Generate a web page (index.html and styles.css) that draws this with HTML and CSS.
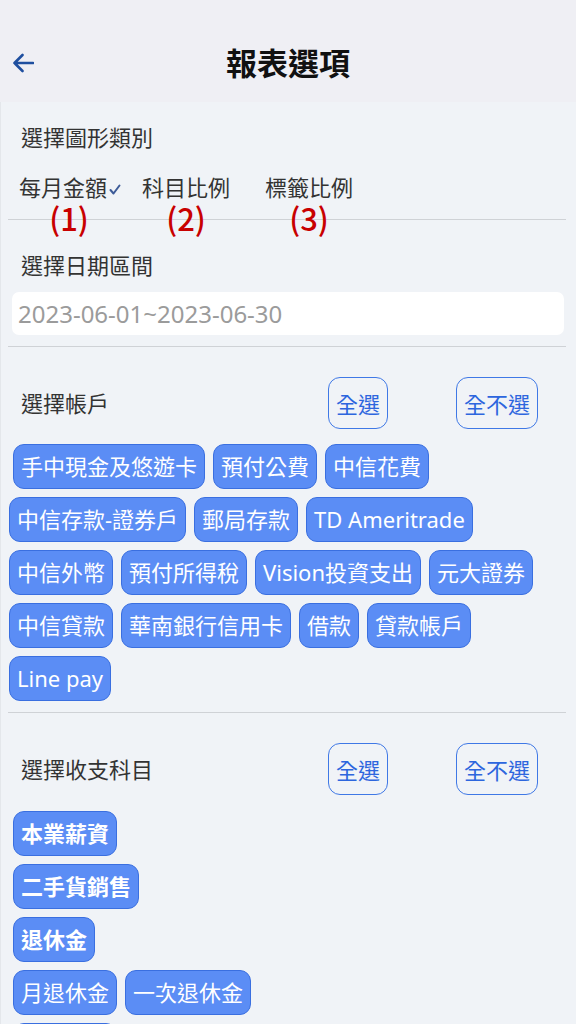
FILE: index.html
```html
<!DOCTYPE html>
<html lang="zh-Hant">
<head>
  <meta charset="UTF-8">
  <title>報表選項</title>
  <link rel="stylesheet" href="styles.css">
</head>
<body>

  <header class="topbar">
    <button class="back" aria-label="返回">
      <svg width="22" height="20" viewBox="0 0 22 20">
        <path d="M21 10H2.5M10.5 2L2.5 10L10.5 18" fill="none" stroke="#1f4f9f" stroke-width="2.6" stroke-linecap="round" stroke-linejoin="round"/>
      </svg>
    </button>
    <h1>報表選項</h1>
    <span></span>
  </header>

  <main class="content">

    <section class="block first">
      <div class="block-title">選擇圖形類別</div>
      <div class="chart-types">
        <div class="type">
          <span class="type-text">每月金額<svg class="tick" width="12" height="11" viewBox="0 0 12 11"><path d="M1.5 6L4.5 9.5L10.5 1.5" fill="none" stroke="#3d5b98" stroke-width="2" stroke-linecap="round" stroke-linejoin="round"/></svg></span>
          <span class="mark">(1)</span>
        </div>
        <div class="type">
          <span class="type-text">科目比例</span>
          <span class="mark">(2)</span>
        </div>
        <div class="type">
          <span class="type-text">標籤比例</span>
          <span class="mark">(3)</span>
        </div>
      </div>
    </section>

    <hr class="line">

    <section class="block">
      <div class="block-title">選擇日期區間</div>
      <input class="date-range" type="text" placeholder="2023-06-01~2023-06-30">
    </section>

    <hr class="line">

    <section class="block">
      <div class="block-head">
        <div class="block-title">選擇帳戶</div>
        <button class="pick">全選</button>
        <button class="pick">全不選</button>
      </div>
      <div class="chips accounts">
        <span class="chip">手中現金及悠遊卡</span>
        <span class="chip">預付公費</span>
        <span class="chip">中信花費</span>
        <span class="chip">中信存款-證券戶</span>
        <span class="chip">郵局存款</span>
        <span class="chip">TD Ameritrade</span>
        <span class="chip">中信外幣</span>
        <span class="chip">預付所得稅</span>
        <span class="chip">Vision投資支出</span>
        <span class="chip">元大證券</span>
        <span class="chip">中信貸款</span>
        <span class="chip">華南銀行信用卡</span>
        <span class="chip">借款</span>
        <span class="chip">貸款帳戶</span>
        <span class="chip">Line pay</span>
      </div>
    </section>

    <hr class="line">

    <section class="block">
      <div class="block-head">
        <div class="block-title">選擇收支科目</div>
        <button class="pick">全選</button>
        <button class="pick">全不選</button>
      </div>
      <div class="items">
        <div class="chip-row"><span class="chip main">本業薪資</span></div>
        <div class="chip-row"><span class="chip main">二手貨銷售</span></div>
        <div class="chip-row"><span class="chip main">退休金</span></div>
        <div class="chip-row"><span class="chip">月退休金</span><span class="chip">一次退休金</span></div>
        <div class="chip-row"><span class="chip main">其他收入</span></div>
      </div>
    </section>

  </main>

</body>
</html>
```

FILE: styles.css
```css
html, body {
  margin: 0;
  height: 1024px;
  overflow: hidden;
}

body {
  font-family: "Noto Sans", "Noto Sans CJK TC", sans-serif;
  background-color: #f0f3f7;
  color: #333;
}

.topbar {
  height: 102px;
  box-sizing: border-box;
  padding-top: 24px;
  display: grid;
  grid-template-columns: 1fr auto 1fr;
  align-items: center;
  background-color: #efeff4;
}

.back {
  justify-self: start;
  margin-left: 12px;
  padding: 0;
  border: none;
  background: none;
  display: flex;
}

.topbar h1 {
  margin: 0;
  font-size: 31px;
  line-height: 1;
  font-weight: 700;
  color: #111;
}

.content {
  padding: 0 10px 0 7px;
  border-left: 1px solid #e4e7eb;
}

.block {
  padding-top: 30px;
}

.block.first {
  padding-top: 20px;
}

.block-title {
  font-size: 22px;
  line-height: 30px;
  padding-left: 13px;
  color: #333;
}

/* 圖形類別 */
.chart-types {
  display: grid;
  grid-template-columns: 123px 123px 123px;
  margin-top: 20px;
  padding-left: 11px;
  font-size: 22px;
  line-height: 30px;
  color: #333;
}

.type {
  position: relative;
}

.tick {
  margin-left: 2px;
  vertical-align: 1px;
}

.mark {
  position: absolute;
  top: 30px;
  left: 0;
  width: 100px;
  text-align: center;
  font-family: "Noto Sans CJK TC", sans-serif;
  font-size: 31px;
  font-weight: 500;
  line-height: 31px;
  color: #c80000;
}

.type:nth-child(2) .mark,
.type:nth-child(3) .mark {
  left: -6px;
}

.line {
  margin: 17px 0 0;
  border: none;
  border-top: 1px solid #cfd2d6;
}

.block:nth-of-type(2) + .line,
.block:nth-of-type(3) + .line {
  margin-top: 11px;
}

/* 日期 */
.date-range {
  display: block;
  box-sizing: border-box;
  width: 552px;
  height: 43px;
  margin: 12px 0 0 4px;
  padding: 0 6px;
  border: none;
  border-radius: 7px;
  background-color: #fff;
  font-family: inherit;
  font-size: 24px;
}

.date-range::placeholder {
  color: #9b9b9b;
}

/* 全選 / 全不選 */
.block-head {
  display: grid;
  grid-template-columns: 320px 128px auto;
  align-items: center;
}

.pick {
  justify-self: start;
  height: 52px;
  padding: 0 7px;
  border: 1px solid #3f78e6;
  border-radius: 12px;
  background: none;
  font-family: "Noto Sans CJK TC", sans-serif;
  font-size: 22px;
  color: #2d66de;
}

/* 標籤 */
.chips {
  display: flex;
  flex-wrap: wrap;
  gap: 8px;
  margin-top: 15px;
  padding-left: 1px;
}

.chips .chip:first-child {
  margin-left: 4px;
}

.items {
  display: flex;
  flex-direction: column;
  gap: 8px;
  margin-top: 16px;
  padding-left: 5px;
}

.chip-row {
  display: flex;
  gap: 8px;
}

.chip {
  display: inline-block;
  height: 45px;
  box-sizing: border-box;
  padding: 0 7px;
  border: 1px solid #3a6fe0;
  border-radius: 11px;
  background-color: #5b8df5;
  color: #fff;
  font-size: 22px;
  line-height: 43px;
  white-space: nowrap;
}

.chip.main {
  font-weight: 700;
}
```
